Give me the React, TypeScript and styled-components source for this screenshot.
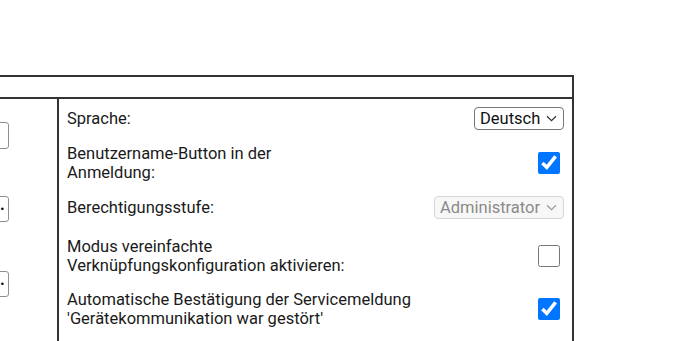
import React from "react"
import styled, { createGlobalStyle } from "styled-components"

const GlobalStyle = createGlobalStyle`
	html, body {
		margin: 0;
		padding: 0;
		background: #ffffff;
		overflow: hidden;
	}
	body {
		font-family: Roboto, "Liberation Sans", Arial, sans-serif;
		font-size: 16.5px;
		color: #1a1a1a;
	}
`

const Page = styled.div`
	padding-top: 75px;
	width: 690px;
	height: 341px;
	box-sizing: border-box;
	overflow: hidden;
`

const Frame = styled.div`
	margin-left: -238px;
	width: 812px;
	border-top: 2px solid #333333;
	border-right: 2px solid #333333;
	box-sizing: border-box;
`

const HeaderRow = styled.div`
	height: 20px;
	border-bottom: 2px solid #333333;
`

const Body = styled.div`
	display: grid;
	grid-template-columns: 297px 1fr;
	min-height: 300px;
`

const LeftCell = styled.div`
	border-right: 2px solid #333333;
	display: flex;
	flex-direction: column;
	align-items: flex-end;
	padding: 23px 48px 0 0;
`

const TextField = styled.input`
	width: 240px;
	height: 27px;
	box-sizing: border-box;
	border: 1px solid #8f8f8f;
	border-radius: 3px;
	font: inherit;
	margin: 0 0 47px 0;
`

const MoreButton = styled.button<{ $gap: number }>`
	width: 26px;
	height: 26px;
	box-sizing: border-box;
	border: 1px solid #8f8f8f;
	border-radius: 3px;
	background: #ffffff;
	padding: 0 4px 0 0;
	margin: 0 0 ${(p) => p.$gap}px 0;
	display: flex;
	align-items: center;
	justify-content: flex-end;
	font-family: "Liberation Sans", Arial, sans-serif;
	font-size: 9px;
	line-height: 1;
	color: #000000;
`

const RightCell = styled.div`
	padding: 8px 8px 0 8px;
	display: flex;
	flex-direction: column;
`

const Row = styled.div<{ $top: number }>`
	display: flex;
	align-items: center;
	justify-content: space-between;
	margin-top: ${(p) => p.$top}px;
	gap: 16px;
`

const Label = styled.div`
	line-height: 19px;
`

const SelectBox = styled.label<{ $disabled?: boolean }>`
	display: inline-flex;
	align-items: center;
	height: 23px;
	box-sizing: border-box;
	padding: 0 6px 0 5px;
	gap: 5px;
	border: 1px solid ${(p) => (p.$disabled ? "#d6d6d6" : "#767676")};
	border-radius: 4px;
	background: ${(p) => (p.$disabled ? "#f7f7f7" : "#ffffff")};
	color: ${(p) => (p.$disabled ? "#8a8a8a" : "#111111")};
`

const NativeSelect = styled.select`
	appearance: none;
	border: none;
	background: transparent;
	padding: 0;
	margin: 0;
	outline: none;
	font-family: Roboto, "Liberation Sans", Arial, sans-serif;
	font-size: 16.5px;
	color: inherit;
	opacity: 1;
`

const Check = styled.input`
	width: 22px;
	height: 22px;
	margin: 0 4px 0 0;
`

const Chevron = ({ color }: { color: string }) => (
	<svg width="11" height="7" viewBox="0 0 11 7" fill="none">
		<path d="M1 1.2 L5.5 5.6 L10 1.2" stroke={color} strokeWidth="1.2" />
	</svg>
)

export default function App() {
	return (
		<>
			<GlobalStyle />
			<Page>
				<Frame>
					<HeaderRow />
					<Body>
						<LeftCell>
							<TextField type="text" />
							<MoreButton $gap={49}>•</MoreButton>
							<MoreButton $gap={0}>•</MoreButton>
						</LeftCell>
						<RightCell>
							<Row $top={0}>
								<Label>Sprache:</Label>
								<SelectBox>
									<NativeSelect defaultValue="de">
										<option value="de">Deutsch</option>
										<option value="en">English</option>
									</NativeSelect>
									<Chevron color="#333333" />
								</SelectBox>
							</Row>
							<Row $top={14}>
								<Label>
									Benutzername-Button in der
									<br />
									Anmeldung:
								</Label>
								<Check type="checkbox" defaultChecked />
							</Row>
							<Row $top={14}>
								<Label>Berechtigungsstufe:</Label>
								<SelectBox $disabled>
									<NativeSelect defaultValue="admin" disabled>
										<option value="admin">Administrator</option>
									</NativeSelect>
									<Chevron color="#9a9a9a" />
								</SelectBox>
							</Row>
							<Row $top={18}>
								<Label>
									Modus vereinfachte
									<br />
									Verknüpfungskonfiguration aktivieren:
								</Label>
								<Check type="checkbox" />
							</Row>
							<Row $top={15}>
								<Label>
									Automatische Bestätigung der Servicemeldung
									<br />
									'Gerätekommunikation war gestört'
								</Label>
								<Check type="checkbox" defaultChecked />
							</Row>
						</RightCell>
					</Body>
				</Frame>
			</Page>
		</>
	)
}
